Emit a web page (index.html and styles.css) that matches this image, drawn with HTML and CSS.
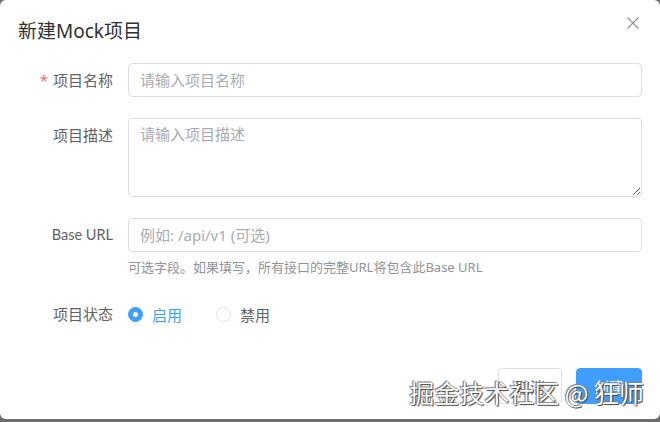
FILE: index.html
```html
<!DOCTYPE html>
<html lang="zh-CN">
<head>
<meta charset="utf-8">
<title>新建Mock项目</title>
<link rel="stylesheet" href="styles.css">
</head>
<body>
<div class="dialog">
  <div class="header">
    <span class="title">新建Mock项目</span>
    <button class="close" aria-label="关闭">
      <svg width="12" height="12" viewBox="0 0 12 12"><path d="M0.5 0.5 L11.5 11.5 M11.5 0.5 L0.5 11.5" stroke="#909399" stroke-width="1.1" fill="none"/></svg>
    </button>
  </div>
  <form class="form">
    <div class="item">
      <label class="label"><span class="req">*</span>项目名称</label>
      <div class="control"><input class="input" placeholder="请输入项目名称"></div>
    </div>
    <div class="item">
      <label class="label">项目描述</label>
      <div class="control"><textarea class="textarea" placeholder="请输入项目描述"></textarea></div>
    </div>
    <div class="item item-url">
      <label class="label label-latin">Base URL</label>
      <div class="control">
        <input class="input" placeholder="例如: /api/v1 (可选)">
        <div class="help">可选字段。如果填写，所有接口的完整URL将包含此Base URL</div>
      </div>
    </div>
    <div class="item item-radio">
      <label class="label">项目状态</label>
      <div class="control radios">
        <span class="radio checked"><span class="dot"></span><span class="rtext">启用</span></span>
        <span class="radio"><span class="dot"></span><span class="rtext">禁用</span></span>
      </div>
    </div>
  </form>
  <div class="footer">
    <button class="btn">取消</button>
    <button class="btn primary">创建</button>
  </div>
  <div class="watermark">掘金技术社区 @ 狂师</div>
</div>
</body>
</html>
```
FILE: styles.css
```css
html, body {
  margin: 0;
  padding: 0;
}
body {
  background: #6e6e6e;
  width: 660px;
  height: 422px;
  overflow: hidden;
  font-family: "Noto Sans", "Noto Sans CJK SC", sans-serif;
}
.dialog {
  position: relative;
  background: #fff;
  height: 419px;
  border-radius: 6px;
  box-sizing: border-box;
}
.header {
  padding: 20px 18px 0;
  height: 42px;
  box-sizing: border-box;
}
.title {
  display: block;
  font-size: 19px;
  line-height: 22px;
  color: #303133;
}
.close {
  position: absolute;
  top: 17px;
  right: 21px;
  width: 12px;
  height: 12px;
  padding: 0;
  border: 0;
  background: none;
  display: flex;
}
.form {
  padding: 21px 18px 0;
  margin: 0;
}
.item {
  display: flex;
  margin-bottom: 21px;
}
.label {
  width: 110px;
  flex: none;
  box-sizing: border-box;
  padding-right: 15px;
  text-align: right;
  font-size: 15px;
  line-height: 34px;
  color: #606266;
}
.label-latin {
  font-family: Lato, "Noto Sans CJK SC", sans-serif;
  font-size: 14.5px;
}
.req {
  color: #f56c6c;
  margin-right: 5px;
}
.control {
  flex: 1;
  min-width: 0;
}
.input, .textarea {
  display: block;
  width: 100%;
  box-sizing: border-box;
  border: 1px solid #dcdfe6;
  border-radius: 4px;
  font-family: "Noto Sans", "Noto Sans CJK SC", sans-serif;
  font-size: 15px;
  color: #606266;
  padding: 0 11px;
  outline: none;
  background: #fff;
}
.input {
  height: 34px;
}
.textarea {
  height: 79px;
  padding-top: 4px;
  line-height: 22px;
  resize: vertical;
}
.input::placeholder, .textarea::placeholder {
  color: #a8abb2;
}
.item-url {
  margin-bottom: 19px;
}
.item-radio {
  margin-bottom: 0;
}
.help {
  margin-top: 4px;
  font-size: 13px;
  line-height: 22px;
  color: #909399;
}
.radios {
  display: flex;
  align-items: center;
  height: 34px;
}
.radio {
  display: flex;
  align-items: center;
  margin-right: 34px;
}
.dot {
  width: 15px;
  height: 15px;
  box-sizing: border-box;
  border: 1px solid #dcdfe6;
  border-radius: 50%;
  background: #fff;
  position: relative;
}
.radio.checked .dot {
  border-color: #409eff;
  background: #409eff;
}
.radio.checked .dot::after {
  content: "";
  position: absolute;
  left: 50%;
  top: 50%;
  width: 5px;
  height: 5px;
  margin: -2.5px 0 0 -2.5px;
  border-radius: 50%;
  background: #fff;
}
.rtext {
  margin-left: 9px;
  font-size: 15px;
  color: #606266;
}
.radio.checked .rtext {
  color: #409eff;
}
.footer {
  display: flex;
  justify-content: flex-end;
  gap: 14px;
  padding: 37px 18px 0;
}
.btn {
  height: 36px;
  padding: 0 16px;
  border: 1px solid #dcdfe6;
  border-radius: 4px;
  background: #fff;
  color: #606266;
  font-family: "Noto Sans", "Noto Sans CJK SC", sans-serif;
  font-size: 15px;
}
.btn.primary {
  background: #409eff;
  border-color: #409eff;
  color: #fff;
  padding: 0 17px;
}
.watermark {
  position: absolute;
  right: 16px;
  top: 376px;
  font-family: "Noto Sans CJK SC", sans-serif;
  font-size: 25px;
  line-height: 32px;
  color: #fff;
  text-shadow: 0 0 1px #333, 1px 1px 1px #444, -1px -1px 1px #888;
  white-space: pre;
}
```
